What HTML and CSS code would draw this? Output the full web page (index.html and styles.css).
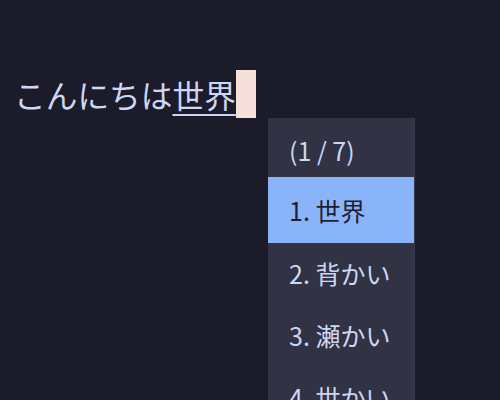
FILE: index.html
```html
<!DOCTYPE html>
<html lang="ja">
<head>
<meta charset="utf-8">
<link rel="stylesheet" href="styles.css">
</head>
<body>
<div class="editor">
  <div class="line">
    <span class="plain">こんにちは</span><span class="preedit">世界</span><span class="cursor"></span>
  </div>
  <div class="candidates">
    <div class="header">(1 / 7)</div>
    <div class="cand selected">1. 世界</div>
    <div class="cand">2. 背かい</div>
    <div class="cand">3. 瀬かい</div>
    <div class="cand">4. 世かい</div>
  </div>
</div>
</body>
</html>
```
FILE: styles.css
```css
html, body {
  margin: 0;
  padding: 0;
  background: #1b1b2a;
  width: 500px;
  height: 400px;
  overflow: hidden;
}
.editor {
  position: relative;
  width: 500px;
  height: 400px;
  font-family: "Noto Sans CJK JP", "Noto Sans", sans-serif;
  color: #cdd6f4;
}
.line {
  display: flex;
  align-items: center;
  padding: 70px 0 0 14px;
  height: 48px;
  font-size: 31.7px;
  line-height: 48px;
}
.preedit {
  text-decoration: underline;
  text-decoration-thickness: 2px;
  text-underline-offset: 6px;
}
.cursor {
  display: inline-block;
  width: 20px;
  height: 48px;
  background: #f5e0dc;
}
.candidates {
  position: absolute;
  left: 268px;
  top: 118px;
  width: 146px;
  background: #313244;
  font-size: 25px;
  box-shadow: 1px 0 0 #3a3b4e;
}
.header {
  height: 59px;
  padding-left: 21px;
  padding-top: 5px;
  box-sizing: border-box;
  display: flex;
  align-items: center;
}
.cand {
  height: 62px;
  padding-left: 21px;
  padding-bottom: 3px;
  box-sizing: border-box;
  display: flex;
  align-items: center;
  white-space: nowrap;
}
.cand.selected {
  height: 66px;
  padding-bottom: 0;
  background: #89b4fa;
  color: #1e1e2e;
}
```
